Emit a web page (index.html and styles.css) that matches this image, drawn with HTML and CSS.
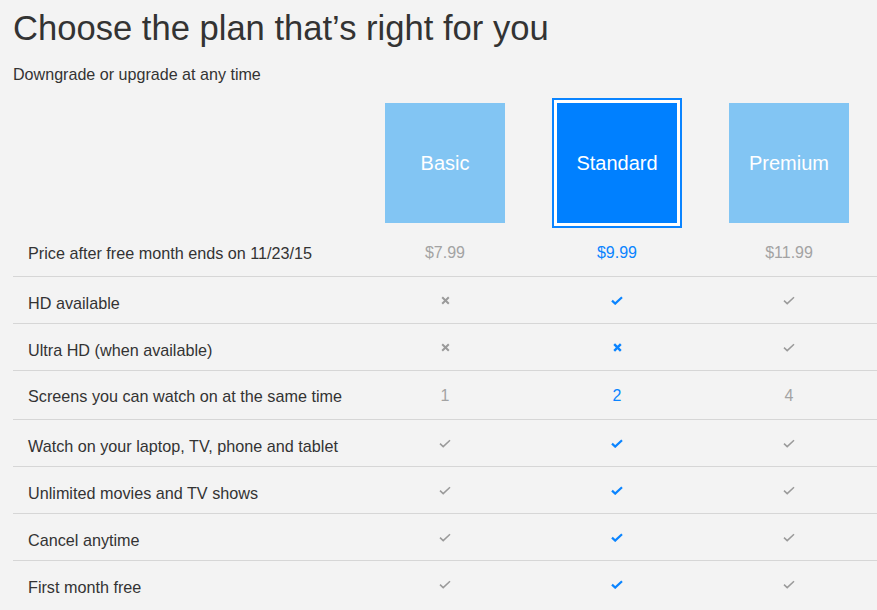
FILE: index.html
```html
<!DOCTYPE html>
<html>
<head>
<meta charset="utf-8">
<link rel="stylesheet" href="styles.css">
</head>
<body>
<div class="page">
  <h1 class="title">Choose the plan that’s right for you</h1>
  <p class="subtitle">Downgrade or upgrade at any time</p>
  <div class="plans">
    <div class="spacer"></div>
    <div class="plan-cell"><div class="plan">Basic</div></div>
    <div class="plan-cell"><div class="plan plan-active">Standard</div></div>
    <div class="plan-cell"><div class="plan">Premium</div></div>
  </div>
  <div class="table">
    <div class="row row-price">
      <div class="label">Price after free month ends on 11/23/15</div>
      <div class="cell">$7.99</div>
      <div class="cell active">$9.99</div>
      <div class="cell">$11.99</div>
    </div>
    <div class="row">
      <div class="label">HD available</div>
      <div class="cell"><svg class="ic-x" viewBox="0 0 9 9"><path d="M1.2 1.2L7.8 7.8M7.8 1.2L1.2 7.8"/></svg></div>
      <div class="cell active"><svg class="ic-check bold" viewBox="0 0 12 9"><path d="M1 4.6L4.2 7.6L11 1.2"/></svg></div>
      <div class="cell"><svg class="ic-check" viewBox="0 0 12 9"><path d="M1 4.6L4.2 7.6L11 1.2"/></svg></div>
    </div>
    <div class="row">
      <div class="label">Ultra HD (when available)</div>
      <div class="cell"><svg class="ic-x" viewBox="0 0 9 9"><path d="M1.2 1.2L7.8 7.8M7.8 1.2L1.2 7.8"/></svg></div>
      <div class="cell active"><svg class="ic-x" viewBox="0 0 9 9"><path d="M1.2 1.2L7.8 7.8M7.8 1.2L1.2 7.8"/></svg></div>
      <div class="cell"><svg class="ic-check" viewBox="0 0 12 9"><path d="M1 4.6L4.2 7.6L11 1.2"/></svg></div>
    </div>
    <div class="row row-tall">
      <div class="label">Screens you can watch on at the same time</div>
      <div class="cell">1</div>
      <div class="cell active">2</div>
      <div class="cell">4</div>
    </div>
    <div class="row">
      <div class="label">Watch on your laptop, TV, phone and tablet</div>
      <div class="cell"><svg class="ic-check" viewBox="0 0 12 9"><path d="M1 4.6L4.2 7.6L11 1.2"/></svg></div>
      <div class="cell active"><svg class="ic-check bold" viewBox="0 0 12 9"><path d="M1 4.6L4.2 7.6L11 1.2"/></svg></div>
      <div class="cell"><svg class="ic-check" viewBox="0 0 12 9"><path d="M1 4.6L4.2 7.6L11 1.2"/></svg></div>
    </div>
    <div class="row">
      <div class="label">Unlimited movies and TV shows</div>
      <div class="cell"><svg class="ic-check" viewBox="0 0 12 9"><path d="M1 4.6L4.2 7.6L11 1.2"/></svg></div>
      <div class="cell active"><svg class="ic-check bold" viewBox="0 0 12 9"><path d="M1 4.6L4.2 7.6L11 1.2"/></svg></div>
      <div class="cell"><svg class="ic-check" viewBox="0 0 12 9"><path d="M1 4.6L4.2 7.6L11 1.2"/></svg></div>
    </div>
    <div class="row">
      <div class="label">Cancel anytime</div>
      <div class="cell"><svg class="ic-check" viewBox="0 0 12 9"><path d="M1 4.6L4.2 7.6L11 1.2"/></svg></div>
      <div class="cell active"><svg class="ic-check bold" viewBox="0 0 12 9"><path d="M1 4.6L4.2 7.6L11 1.2"/></svg></div>
      <div class="cell"><svg class="ic-check" viewBox="0 0 12 9"><path d="M1 4.6L4.2 7.6L11 1.2"/></svg></div>
    </div>
    <div class="row row-last">
      <div class="label">First month free</div>
      <div class="cell"><svg class="ic-check" viewBox="0 0 12 9"><path d="M1 4.6L4.2 7.6L11 1.2"/></svg></div>
      <div class="cell active"><svg class="ic-check bold" viewBox="0 0 12 9"><path d="M1 4.6L4.2 7.6L11 1.2"/></svg></div>
      <div class="cell"><svg class="ic-check" viewBox="0 0 12 9"><path d="M1 4.6L4.2 7.6L11 1.2"/></svg></div>
    </div>
  </div>
</div>
</body>
</html>
```

FILE: styles.css
```css
html, body {
  margin: 0;
  padding: 0;
  background: #f3f3f3;
  font-family: "Liberation Sans", Arial, sans-serif;
  color: #333;
}

.page {
  padding: 0 0 0 13px;
  overflow: hidden;
}

.title {
  margin: 0;
  padding-top: 8px;
  font-size: 34.6px;
  font-weight: normal;
  line-height: 40px;
  color: #333;
}

.subtitle {
  margin: 0;
  padding-top: 16px;
  font-size: 16.1px;
  line-height: 20px;
  color: #333;
}

.plans {
  display: grid;
  grid-template-columns: 346px 172px 172px 172px;
  padding-top: 19px;
  height: 127px;
}

.plan-cell {
  display: flex;
  justify-content: center;
}

.plan {
  width: 120px;
  height: 120px;
  background: #82c5f3;
  color: #fff;
  font-size: 20px;
  display: flex;
  align-items: center;
  justify-content: center;
}

.plan-active {
  background: #0080ff;
  box-shadow: 0 0 0 3px #fff, 0 0 0 5px #0a84ff;
}

.table {
  display: flex;
  flex-direction: column;
}

.row {
  display: grid;
  grid-template-columns: 346px 172px 172px 172px 1fr;
  height: 46px;
  align-items: center;
  border-bottom: 1px solid #d6d6d6;
}

.row-tall {
  height: 48px;
}

.row-last {
  border-bottom: none;
}

.label {
  padding-left: 15px;
  padding-top: 6px;
  font-size: 16.2px;
  color: #333;
}

.row-price .label,
.row-price .cell {
  padding-top: 0;
}

.row-tall .label,
.row-tall .cell {
  padding-top: 2px;
}

.cell {
  text-align: center;
  font-size: 16px;
  color: #a3a3a3;
  display: flex;
  justify-content: center;
  align-items: center;
}

.cell.active {
  color: #0a84ff;
}

.ic-check {
  width: 12px;
  height: 9px;
  fill: none;
  stroke: #9a9a9a;
  stroke-width: 1.5;
}

.ic-check.bold {
  stroke: #0a84ff;
  stroke-width: 2.2;
}

.ic-x {
  width: 9px;
  height: 9px;
  fill: none;
  stroke: #9a9a9a;
  stroke-width: 2;
}

.active .ic-x {
  stroke: #0a84ff;
  stroke-width: 2.4;
}
```
